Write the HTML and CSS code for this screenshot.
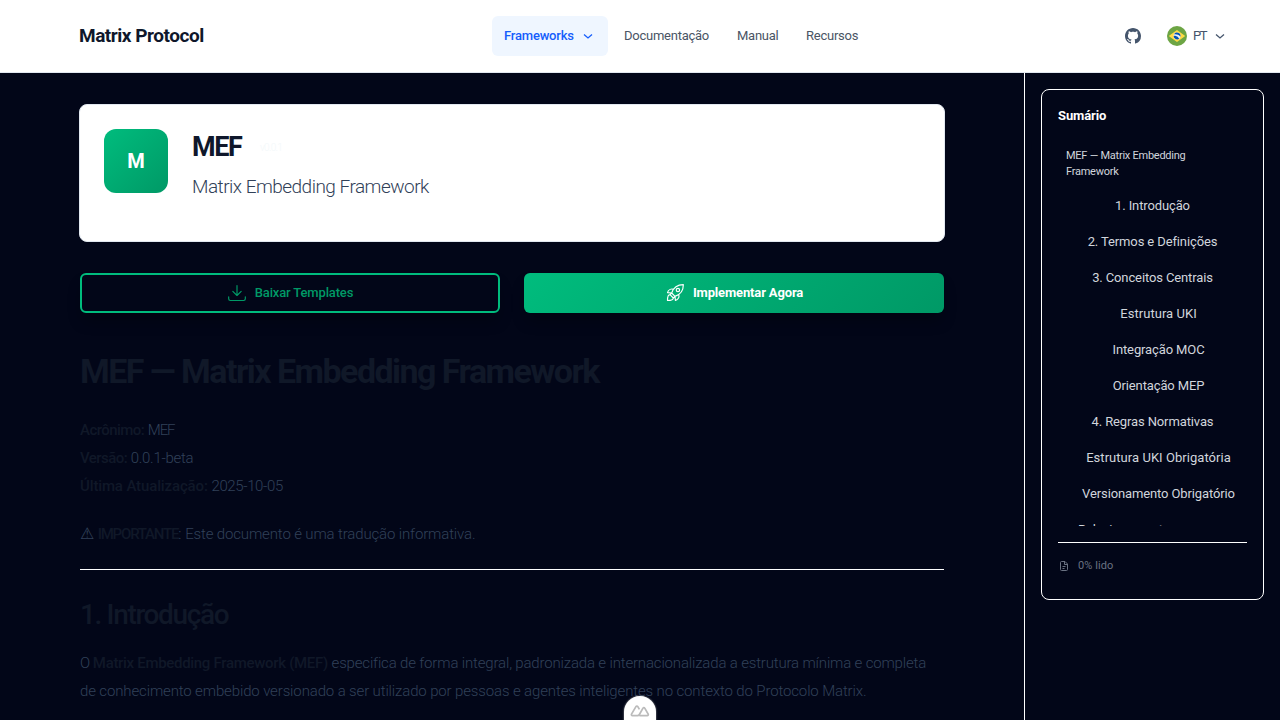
FILE: index.html
```html
<!DOCTYPE html>
<html lang="pt">
<head>
<meta charset="utf-8">
<title>MEF — Matrix Protocol</title>
<link rel="stylesheet" href="styles.css">
</head>
<body>
<header class="header">
  <a class="brand">Matrix Protocol</a>
  <nav class="nav">
    <a class="nav-item active"><span class="t-frameworks">Frameworks</span><svg class="chev" viewBox="0 0 24 24"><path d="m4 9 8 7 8-7"/></svg></a>
    <a class="nav-item t-doc">Documentação</a>
    <a class="nav-item t-manual">Manual</a>
    <a class="nav-item t-rec">Recursos</a>
  </nav>
  <div class="tools">
    <svg class="github" viewBox="0 0 16 16"><path d="M8 0C3.58 0 0 3.58 0 8c0 3.54 2.29 6.53 5.47 7.59.4.07.55-.17.55-.38 0-.19-.01-.82-.01-1.49-2.01.37-2.53-.49-2.69-.94-.09-.23-.48-.94-.82-1.13-.28-.15-.68-.52-.01-.53.63-.01 1.08.58 1.23.82.72 1.21 1.87.87 2.33.66.07-.52.28-.87.51-1.07-1.78-.2-3.64-.89-3.64-3.95 0-.87.31-1.59.82-2.15-.08-.2-.36-1.02.08-2.12 0 0 .67-.21 2.2.82.64-.18 1.32-.27 2-.27s1.36.09 2 .27c1.53-1.04 2.2-.82 2.2-.82.44 1.1.16 1.92.08 2.12.51.56.82 1.27.82 2.15 0 3.07-1.87 3.75-3.65 3.95.29.25.54.73.54 1.48 0 1.07-.01 1.93-.01 2.2 0 .21.15.46.55.38A8.01 8.01 0 0 0 16 8c0-4.42-3.58-8-8-8"/></svg>
    <svg class="flag" viewBox="0 0 512 512"><circle cx="256" cy="256" r="256" fill="#6da544"/><path d="M256 100 467 256 256 412 45 256Z" fill="#ffda44"/><circle cx="256" cy="256" r="89" fill="#f0f0f0"/><path d="M212 250c-16 0-30 2-44 7a89 89 0 0 0 145 67 142 142 0 0 0-101-74Zm131 24a89 89 0 0 0-167-57c11-2 23-4 36-4 50 0 96 21 131 61Z" fill="#0052b4"/></svg>
    <span class="lang">PT</span>
    <svg class="chev" viewBox="0 0 24 24"><path d="m4 9 8 7 8-7"/></svg>
  </div>
</header>
<div class="layout">
  <main class="main">
    <section class="hero">
      <div class="logo">M</div>
      <div>
        <div class="hero-top"><h2 class="hero-title">MEF</h2><span class="badge">v0.0.1</span></div>
        <p class="hero-sub">Matrix Embedding Framework</p>
      </div>
    </section>
    <div class="actions">
      <a class="btn outline"><svg viewBox="0 0 24 24"><path d="M12 3v12m-5-5 5 5 5-5M2 16.500v2.500a2 2 0 0 0 2 2h16a2 2 0 0 0 2-2v-2.500"/></svg><span>Baixar Templates</span></a>
      <a class="btn solid"><svg viewBox="0 0 24 24"><path d="M8 12c2-6 7-10 14-10 0 7-4 12-10 14ZM8 12 3 11.500c1-3 4-5 7-4M12 16l.5 5c3-1 5-4 4-7M8 12l-2 2 4 4 2-2M6 14c-3 0-3 4-3 7 3 0 7 0 7-3"/><circle cx="15.500" cy="8.500" r="2"/></svg><span>Implementar Agora</span></a>
    </div>
    <article class="article">
      <h1>MEF — Matrix Embedding Framework</h1>
      <p class="meta"><strong class="t-acr">Acrônimo:</strong> <span class="t-mef">MEF</span><br><strong class="t-ver">Versão:</strong> <span class="t-beta">0.0.1-beta</span><br><strong class="t-upd">Última Atualização:</strong> <span class="t-date">2025-10-05</span></p>
      <p class="note"><span class="warn">⚠</span> <strong class="t-imp">IMPORTANTE</strong>: <span class="t-note">Este documento é uma tradução informativa.</span></p>
      <hr>
      <h2>1. Introdução</h2>
      <p class="intro"><span class="t-o">O</span> <strong class="t-name">Matrix Embedding Framework (MEF)</strong> <span class="t-l1">especifica de forma integral, padronizada e internacionalizada a estrutura mínima e completa</span><br><span class="t-l2">de conhecimento embebido versionado a ser utilizado por pessoas e agentes inteligentes no contexto do Protocolo Matrix.</span></p>
    </article>
  </main>
  <aside class="side">
    <div class="toc">
      <h3>Sumário</h3>
      <div class="toc-list">
        <a class="toc-root">MEF — Matrix Embedding Framework</a>
        <a>1. Introdução</a>
        <a>2. Termos e Definições</a>
        <a>3. Conceitos Centrais</a>
        <a class="sub wide">Estrutura UKI</a>
        <a class="sub">Integração MOC</a>
        <a class="sub">Orientação MEP</a>
        <a>4. Regras Normativas</a>
        <a class="sub wide">Estrutura UKI Obrigatória</a>
        <a class="sub">Versionamento Obrigatório</a>
        <a class="sub left">Relacionamentos</a>
      </div>
      <div class="toc-foot"><svg viewBox="0 0 24 24"><path d="M14 3H7a2 2 0 0 0-2 2v14a2 2 0 0 0 2 2h10a2 2 0 0 0 2-2V8ZM13 3v6h6M9 13h6M9 17h4"/></svg><span>0% lido</span></div>
    </div>
  </aside>
</div>
<div class="devtools"><svg viewBox="0 0 32 20"><path d="M13.500 17.500H3.800c-1.300 0-2-1.400-1.400-2.500L9.500 3c.7-1.200 2.300-1.200 3 0l2.600 4.400M15 17.500h12.700c1.300 0 2-1.300 1.400-2.500l-5.500-9.500c-.6-1.100-2.200-1.100-2.800 0L15 15.500c-.8 1.400-1.500 2-3 2"/></svg></div>
</body>
</html>
```
FILE: styles.css
```css
* { box-sizing: border-box; }
body {
  margin: 0;
  height: 720px;
  overflow: hidden;
  background: #020618;
  color: #314158;
  font-family: Roboto, "Liberation Sans", sans-serif;
  font-weight: 300;
}
h1, h2, h3, p { margin: 0; }
svg { fill: none; stroke: currentColor; flex: none; }

.header {
  height: 73px;
  background: #fff;
  border-bottom: 1px solid #e2e8f0;
  display: flex;
  align-items: center;
  padding-left: 79px;
}
.brand {
  width: 413px;
  padding-bottom: 2px;
  color: #0f172b;
  font-size: 19px;
  font-weight: 700;
  letter-spacing: -0.47px;
}
.nav { display: flex; gap: 4px; width: 633px; }
.nav-item {
  height: 40px;
  padding: 0 12px 2px;
  border-radius: 6px;
  display: flex;
  align-items: center;
  font-size: 13px;
  font-weight: 400;
  letter-spacing: -0.25px;
  color: #4a5565;
  white-space: nowrap;
}
.nav-item.active {
  width: 116px;
  gap: 8px;
  color: #155dfc;
  background: #eff6ff;
  font-weight: 500;
  letter-spacing: -0.2px;
}
.nav-item .chev { margin-top: 2px; }
.t-frameworks { width: 70px; }
.t-doc { width: 109px; }
.t-manual { width: 65px; }
.chev { width: 12px; height: 12px; stroke-width: 2.6; }
.tools { display: flex; align-items: center; color: #45556c; }
.github { width: 16px; height: 16px; fill: currentColor; stroke: none; }
.flag { width: 20px; height: 20px; margin-left: 26px; stroke: none; }
.lang { width: 21px; margin-left: 6px; padding-bottom: 2px; font-size: 13px; font-weight: 400; letter-spacing: -1.5px; }

.layout { display: flex; height: 647px; }
.main { width: 1024px; padding: 31px 79px 0; }
.hero {
  height: 138px;
  padding: 24px;
  display: flex;
  gap: 24px;
  background: #fff;
  border: 1px solid #e2e8f0;
  border-radius: 8px;
}
.logo {
  width: 64px;
  height: 64px;
  border-radius: 12px;
  background: linear-gradient(135deg, #00bc7d, #009966);
  color: #fff;
  font-size: 20px;
  font-weight: 700;
  display: flex;
  align-items: center;
  justify-content: center;
}
.hero-top { display: flex; align-items: center; height: 36px; gap: 18px; }
.hero-title { width: 50px; font-size: 27px; font-weight: 700; color: #0f172b; letter-spacing: -1.4px; }
.badge { font-size: 10px; color: #f3f8fa; letter-spacing: -0.7px; }
.hero-sub { font-size: 19px; line-height: 28px; margin-top: 8px; letter-spacing: -0.52px; }

.actions { display: grid; grid-template-columns: 420px 420px; gap: 24px; margin: 31px 1px 0; }
.btn {
  height: 40px;
  border-radius: 6px;
  display: flex;
  align-items: center;
  justify-content: center;
  gap: 8px;
  font-size: 13px;
  box-shadow: 0 10px 15px -3px rgba(0, 0, 0, .3);
}
.btn svg { width: 20px; height: 20px; stroke-width: 1.4; stroke-linecap: round; stroke-linejoin: round; }
.btn span { padding-bottom: 2px; letter-spacing: -0.15px; }
.outline { border: 2px solid #00bc7d; color: #009966; font-weight: 500; }
.solid { background: linear-gradient(135deg, #00bc7d, #009966); color: #fff; font-weight: 700; }

.article { padding: 38px 1px 0; white-space: nowrap; }
.article h1 { font-size: 34px; line-height: 40px; font-weight: 700; color: #101828; letter-spacing: -1.54px; }
.article p { font-size: 15px; line-height: 28px; }
.article strong { font-weight: 500; color: #101828; }
.meta { margin-top: 25px; }
.note { margin-top: 20px; }
.t-acr { letter-spacing: -0.55px; }
.t-mef { letter-spacing: -1.1px; }
.t-ver { letter-spacing: -0.55px; }
.t-beta { letter-spacing: -0.3px; }
.t-upd { letter-spacing: -0.13px; }
.t-date { letter-spacing: -0.37px; }
.t-imp { letter-spacing: -1.2px; }
.t-note { letter-spacing: -0.14px; }
.t-name { letter-spacing: -0.31px; }
.t-o { letter-spacing: -1px; }
.t-l1 { letter-spacing: -0.165px; }
.t-l2 { letter-spacing: -0.135px; }
.warn { font-family: "DejaVu Sans", sans-serif; font-size: 16px; }
.article hr { height: 1px; border: 0; background: #fff; margin: 21px 0 0; }
.article h2 { font-size: 28px; line-height: 36px; font-weight: 500; color: #101828; margin-top: 27px; letter-spacing: -1.35px; }
.article .intro { margin-top: 16px; }

.side { width: 256px; border-left: 1px solid #fff; padding: 16px; }
.toc { height: 511px; border: 1px solid #fff; border-radius: 8px; padding: 16px; }
.toc h3 { font-size: 13px; line-height: 20px; font-weight: 700; color: #fff; letter-spacing: -0.1px; }
.toc-list { height: 384px; margin-top: 16px; overflow: hidden; }
.toc-list a {
  display: block;
  height: 36px;
  line-height: 36px;
  font-size: 13px;
  font-weight: 400;
  letter-spacing: -0.12px;
  color: #d1d5dc;
  text-align: center;
  white-space: nowrap;
}
.toc-list .toc-root {
  height: 46px;
  padding: 6px 30px 0 8px;
  font-size: 11px;
  line-height: 16px;
  text-align: left;
  letter-spacing: -0.25px;
  white-space: normal;
}
.toc-list .sub { padding-left: 12px; }
.toc-list .wide { letter-spacing: 0.05px; }
.toc-list .left { text-align: left; padding-left: 20px; }
.toc-foot {
  margin-top: 16px;
  border-top: 1px solid #fff;
  padding-top: 15px;
  display: flex;
  align-items: center;
  gap: 8px;
  font-size: 11px;
  line-height: 16px;
  font-weight: 400;
  color: #6a7282;
}
.toc-foot svg { width: 12px; height: 12px; stroke-width: 2; }
.toc-foot span { letter-spacing: 0.1px; }

.devtools {
  position: absolute;
  left: 624px;
  top: 696px;
  width: 32px;
  height: 40px;
  border-radius: 16px;
  background: #fff;
  color: #bbb;
  display: flex;
  justify-content: center;
  padding-top: 8px;
  box-shadow: 0 0 2px #aaa;
}
.devtools svg { width: 20px; height: 14px; stroke-width: 2.8; }
```
